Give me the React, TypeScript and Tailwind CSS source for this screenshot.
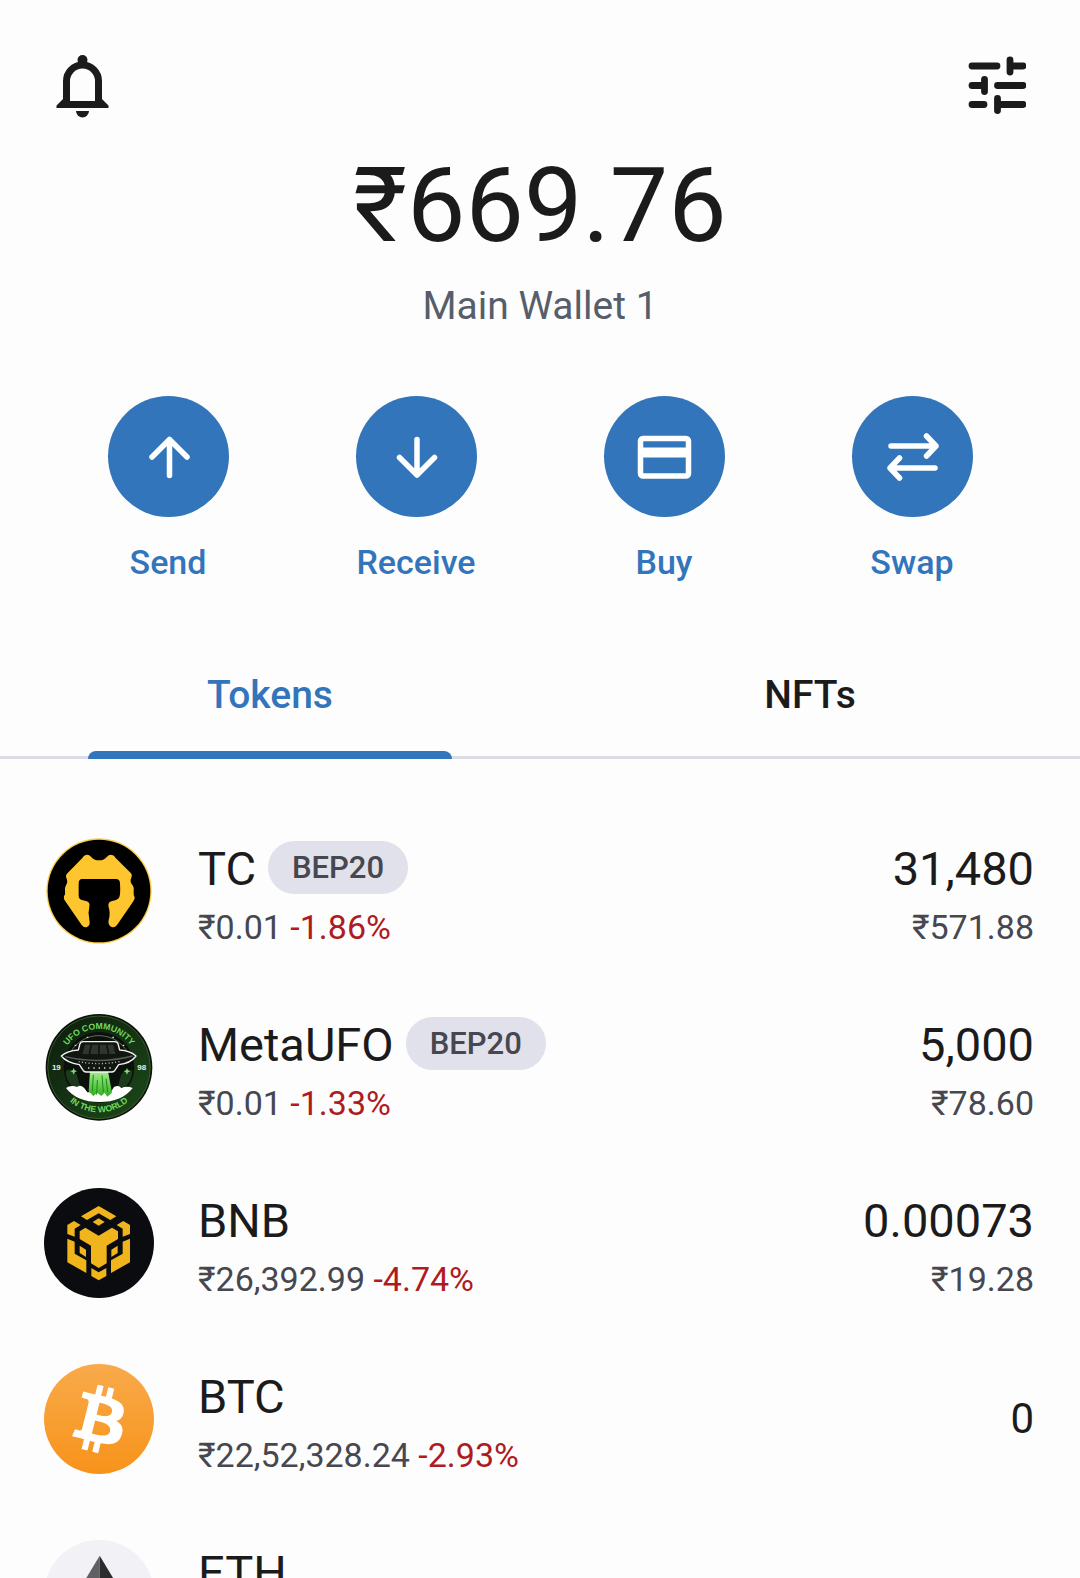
import type { ReactNode } from 'react'

type Token = {
  symbol: string
  network?: string
  price?: string
  change?: string
  balance?: string
  value?: string
  logo: ReactNode
}

function BellIcon() {
  return (
    <svg viewBox="0 0 58 64" className="h-16 w-[58px]" fill="none" aria-hidden="true">
      <circle cx="28.500" cy="6" r="5" fill="#1b1b1c" />
      <path d="M12.500 52V27a16 16 0 0 1 32 0V52" stroke="#1b1b1c" strokeWidth="7" />
      <path d="M2.500 54v-2.500l7-7h6V47h26v-2.500h6l7 7V54z" fill="#1b1b1c" />
      <path d="M22 57h13a6.500 6.500 0 0 1-13 0z" fill="#1b1b1c" />
    </svg>
  )
}

function TuneIcon() {
  return (
    <svg
      viewBox="0 0 58 64"
      className="h-16 w-[58px]"
      fill="none"
      stroke="#1b1b1c"
      strokeWidth="6.800"
      strokeLinecap="round"
      aria-hidden="true"
    >
      <path d="M4 12h25M42 12h13M42 6v12" />
      <path d="M4 31.500h12M16.500 25.500v12M29.500 31.500H55" />
      <path d="M4 50.500h12M29.500 44.500v12M29.500 50.500H55" />
    </svg>
  )
}

function SendIcon() {
  return <path d="M61.500 79.500V43.500M44 61l17.500-17.500L79 61" />
}

function ReceiveIcon() {
  return <path d="M61 43.500V79M43.500 61.500L61 79l17.500-17.500" />
}

function BuyIcon() {
  return (
    <>
      <rect x="36.500" y="42.500" width="48" height="37.500" rx="2.500" />
      <path d="M36 56.500h49" strokeWidth="10" strokeLinecap="butt" />
    </>
  )
}

function SwapIcon() {
  return (
    <>
      <path d="M39 50h45M74.500 40l9.500 10-9.500 10" />
      <path d="M83 72H38M47.500 62L38 72l9.500 10" />
    </>
  )
}

function TcLogo() {
  return (
    <svg viewBox="42 48 330 330" className="size-full" aria-hidden="true">
      <circle cx="207" cy="213" r="158" fill="#fbcf4a" />
      <circle cx="207" cy="213" r="154" fill="#000" />
      <path
        d="M165 106q10-5 18 4q8 11 24 11t24-11q8-9 18-4q4 2 8 8l46 46q5 5 1 13q-6 12 4 23q6 9 3 20q-1 10 3 16q1 7-5 13l-48 70q-8 10-18 5q-10-6-7-20q6-20 0-38q-4-14 8-18l14-4q8-3 10-9q4-10 2-40q0-14-12-14H156q-10 0-10 14v36q0 10 10 13l14 4q11 4 8 16q-5 20 0 39q4 16-6 21q-9 5-17-5l-48-70q-8-8-5-16q5-8 3-16q-2-8 3-17q7-10 1-22q-3-7 1-12l47-48q4-6 8-8z"
        fill="#fdc52e"
      />
    </svg>
  )
}

function MetaUfoLogo() {
  return (
    <svg viewBox="42 36 330 330" className="size-full" aria-hidden="true">
      <defs>
        <path id="ufo-top" d="M92 202a115 115 0 0 1 230 0" />
        <path id="ufo-bottom" d="M72 202a135 135 0 0 0 270 0" />
        <linearGradient id="ufo-ring" x1="0" x2="1" y1="0" y2="1">
          <stop offset="0" stopColor="#0d1c0d" />
          <stop offset="1" stopColor="#1c4a1a" />
        </linearGradient>
        <linearGradient id="ufo-beam" x1="0" x2="0" y1="0" y2="1">
          <stop offset="0" stopColor="#a4f08c" />
          <stop offset="1" stopColor="#2fae20" />
        </linearGradient>
      </defs>
      <circle cx="207" cy="202" r="160" fill="#0b120b" />
      <circle cx="207" cy="202" r="154" fill="url(#ufo-ring)" stroke="#4f7438" strokeWidth="2" />
      <circle cx="207" cy="202" r="106" fill="#0a100a" />
      <path d="M114 174a98 98 0 0 1 186 0" fill="none" stroke="#8f9a8f" strokeWidth="2" />
      <path d="M107 212q22-10 34 14l10 36-24-2q-20-20-20-48zM307 212q-22-10-34 14l-10 36 24-2q20-20 20-48z" fill="#1b3a1b" />
      <path d="M108 264q14-10 34-3q8-8 20 2l10 14h70l10-16q14-8 22 3q16-8 34 0q-32 42-100 42q-68 0-100-42z" fill="#fff" />
      <path d="M180 214h54l12 64-14 12-8-12-10 10-12-10-12 10-14-14z" fill="url(#ufo-beam)" />
      <path d="M190 224l-3 50M202 240l-2 44M216 226l4 50M228 236l5 40" stroke="#1d8a16" strokeWidth="3" />
      <path
        d="M145 150l5-19q2-6 10-6h94q8 0 10 6l5 19q32 2 49 18q-16 22-52 26l-12 18q-4 4-10 4H170q-6 0-10-4l-12-18q-38-6-54-26q18-16 51-18z"
        fill="#111611"
        stroke="#f5f5f5"
        strokeWidth="4"
        strokeLinejoin="round"
      />
      <path d="M165 134h84l8 28H157z" fill="#303530" />
      <path d="M184 134l-6 28M207 134v28M230 134l6 28" stroke="#111611" strokeWidth="5" />
      <path d="M106 170q100 24 202-2" fill="none" stroke="#596059" strokeWidth="4" />
      <path d="M146 185q60 12 126-1" fill="none" stroke="#c9cec9" strokeWidth="4" strokeDasharray="3 7" />
      <path d="M174 204h68" fill="none" stroke="#d8dcd8" strokeWidth="5" strokeDasharray="4 12" />
      <path d="M131 204l3 7 7 3-7 3-3 7-3-7-7-3 7-3zM291 204l3 7 7 3-7 3-3 7-3-7-7-3 7-3z" fill="#7ee06a" />
      <path d="M134 136h5M170 112h5M247 112h5M278 136h5" stroke="#cfd8cf" strokeWidth="4" />
      <g
        fill="#72d85c"
        textAnchor="middle"
        className="font-['Liberation_Sans'] text-[26px] font-bold"
      >
        <text>
          <textPath href="#ufo-top" startOffset="50%">UFO COMMUNITY</textPath>
        </text>
        <text>
          <textPath href="#ufo-bottom" startOffset="50%">IN THE WORLD</textPath>
        </text>
      </g>
      <g fill="#e8eee8" textAnchor="middle" className="font-['Liberation_Sans'] text-[24px] font-bold">
        <text x="79" y="210">19</text>
        <text x="335" y="210">98</text>
      </g>
    </svg>
  )
}

function BnbLogo() {
  return (
    <svg viewBox="42 53 330 330" className="size-full" aria-hidden="true">
      <circle cx="207" cy="218" r="165" fill="#0a0c10" />
      <g fill="#f0b41c">
        <path d="M206 107l53 31-18 11-35-20-35 20-18-11z" />
        <path d="M206 144l18 11-18 11-18-11z" />
        <path d="M112 164l20-12 20 12-18 11v24l-22-8z" />
        <path d="M300 164l-20-12-20 12 18 11v24l22-8z" />
        <path d="M149 183l17-11 40 24 40-24 18 11v23l-34 20v53l-24 14-23-14v-53l-34-20z" />
        <path d="M112 205l22 9v36l35 20v38l-57-32z" />
        <path d="M300 205l-22 9v36l-35 20v38l57-32z" />
        <path d="M149 226l19 12v22l-19-12zM263 226l-19 12v22l19-12z" />
        <path d="M184 293l22 13 23-13v24l-23 13-22-13z" />
      </g>
    </svg>
  )
}

function BtcLogo() {
  return (
    <svg viewBox="0 0 32 32" className="size-full" aria-hidden="true">
      <defs>
        <linearGradient id="btc-fill" x1="0" x2="0" y1="0" y2="1">
          <stop offset="0" stopColor="#f9aa4b" />
          <stop offset="1" stopColor="#f7931a" />
        </linearGradient>
      </defs>
      <circle cx="16" cy="16" r="16" fill="url(#btc-fill)" />
      <path
        fill="#fff"
        d="M23.189 14.020c.314-2.096-1.283-3.223-3.465-3.975l.708-2.840-1.728-.430-.690 2.765c-.454-.114-.920-.220-1.385-.326l.695-2.783L15.596 6l-.708 2.839c-.376-.086-.746-.170-1.104-.260l.002-.009-2.384-.595-.460 1.846s1.283.294 1.256.312c.700.175.826.638.805 1.006l-.806 3.235c.048.012.110.030.180.057l-.183-.045-1.130 4.532c-.086.212-.303.531-.793.410.018.025-1.256-.313-1.256-.313l-.858 1.978 2.250.561c.418.105.828.215 1.231.318l-.715 2.872 1.727.430.708-2.840c.472.127.930.245 1.378.357l-.706 2.828 1.728.430.715-2.866c2.948.558 5.164.333 6.097-2.333.752-2.146-.037-3.385-1.588-4.192 1.130-.260 1.980-1.003 2.207-2.538zm-3.950 5.538c-.533 2.147-4.148.986-5.320.695l.950-3.805c1.172.293 4.929.872 4.370 3.110zm.535-5.569c-.487 1.953-3.495.960-4.470.717l.860-3.450c.975.243 4.118.696 3.610 2.733z"
      />
    </svg>
  )
}

function EthLogo() {
  return (
    <svg viewBox="0 0 32 32" className="size-full" aria-hidden="true">
      <circle cx="16" cy="16" r="16" fill="#f1f1f6" />
      <path d="M16.200 4.600L8.700 17l7.500 4.400z" fill="#606062" />
      <path d="M16.200 4.600v16.800l7.500-4.400z" fill="#2c2c2e" />
      <path d="M8.700 18.500l7.500 10.500v-6z" fill="#8c8c8c" />
      <path d="M16.200 29v-6l7.500-4.500z" fill="#3c3c3b" />
    </svg>
  )
}

const actions = [
  { label: 'Send', icon: SendIcon },
  { label: 'Receive', icon: ReceiveIcon },
  { label: 'Buy', icon: BuyIcon },
  { label: 'Swap', icon: SwapIcon },
]

const tokens: Token[] = [
  {
    symbol: 'TC',
    network: 'BEP20',
    price: '₹0.01',
    change: '-1.86%',
    balance: '31,480',
    value: '₹571.88',
    logo: <TcLogo />,
  },
  {
    symbol: 'MetaUFO',
    network: 'BEP20',
    price: '₹0.01',
    change: '-1.33%',
    balance: '5,000',
    value: '₹78.60',
    logo: <MetaUfoLogo />,
  },
  {
    symbol: 'BNB',
    price: '₹26,392.99',
    change: '-4.74%',
    balance: '0.00073',
    value: '₹19.28',
    logo: <BnbLogo />,
  },
  {
    symbol: 'BTC',
    price: '₹22,52,328.24',
    change: '-2.93%',
    balance: '0',
    logo: <BtcLogo />,
  },
  {
    symbol: 'ETH',
    logo: <EthLogo />,
  },
]

function TokenRow({ token }: { token: Token }) {
  return (
    <li className="flex h-44 shrink-0 items-center pl-11 pr-[46px]">
      <div className="size-[110px] shrink-0">{token.logo}</div>
      <div className="ml-11 flex flex-1 flex-col gap-2">
        <div className="flex h-16 items-center gap-3">
          <span className="text-[47px] leading-[64px]">{token.symbol}</span>
          {token.network && (
            <span className="mb-1 rounded-full bg-[#e0e1eb] px-6 text-[31px] leading-[53px] font-medium text-[#46474f]">
              {token.network}
            </span>
          )}
        </div>
        <p className="min-h-9 text-[34px] leading-9 text-[#46474f]">
          {token.price} <span className="text-[#ae1b20]">{token.change}</span>
        </p>
      </div>
      {token.balance && (
        <div className="flex flex-col gap-2 text-right">
          <span className={`leading-[64px] ${token.value ? 'text-[47px]' : 'text-[42px]'}`}>
            {token.balance}
          </span>
          {token.value && (
            <span className="text-[34px] leading-9 text-[#46474f]">{token.value}</span>
          )}
        </div>
      )}
    </li>
  )
}

export default function App() {
  return (
    <main className="flex h-screen flex-col overflow-hidden bg-[#fdfdfd] font-[Roboto,sans-serif] text-[#1b1b1c]">
      <header className="flex justify-between px-[54px] pt-[54px]">
        <button type="button" aria-label="Notifications">
          <BellIcon />
        </button>
        <button type="button" aria-label="Manage tokens">
          <TuneIcon />
        </button>
      </header>

      <section className="mt-7 text-center">
        <h1 className="text-[104px] leading-[120px]">₹669.76</h1>
        <p className="mt-4 text-[39px] leading-[48px] text-[#565e6b]">Main Wallet 1</p>
      </section>

      <nav className="mt-[66px] grid grid-cols-4 px-11">
        {actions.map(({ label, icon: Icon }) => (
          <button
            key={label}
            type="button"
            className="flex flex-col items-center gap-[25px] text-[34px] leading-10 font-medium text-[#3375bb]"
          >
            <span className="size-[121px] rounded-full bg-[#3375bb]">
              <svg
                viewBox="0 0 121 121"
                className="size-full"
                fill="none"
                stroke="#fff"
                strokeWidth="5.500"
                strokeLinecap="round"
                strokeLinejoin="round"
                aria-hidden="true"
              >
                <Icon />
              </svg>
            </span>
            {label}
          </button>
        ))}
      </nav>

      <div
        role="tablist"
        className="mt-12 grid h-[129px] shrink-0 grid-cols-2 border-b-[3px] border-[#dcdce6] text-[39px] font-medium"
      >
        <button type="button" role="tab" aria-selected="true" className="relative pt-1 text-[#3375bb]">
          Tokens
          <span className="absolute inset-x-[88px] -bottom-[3px] h-2 rounded-t-lg bg-[#3375bb]" />
        </button>
        <button type="button" role="tab" aria-selected="false" className="pt-1">
          NFTs
        </button>
      </div>

      <ul className="mt-11 flex flex-1 flex-col overflow-hidden">
        {tokens.map((token) => (
          <TokenRow key={token.symbol} token={token} />
        ))}
      </ul>
    </main>
  )
}
